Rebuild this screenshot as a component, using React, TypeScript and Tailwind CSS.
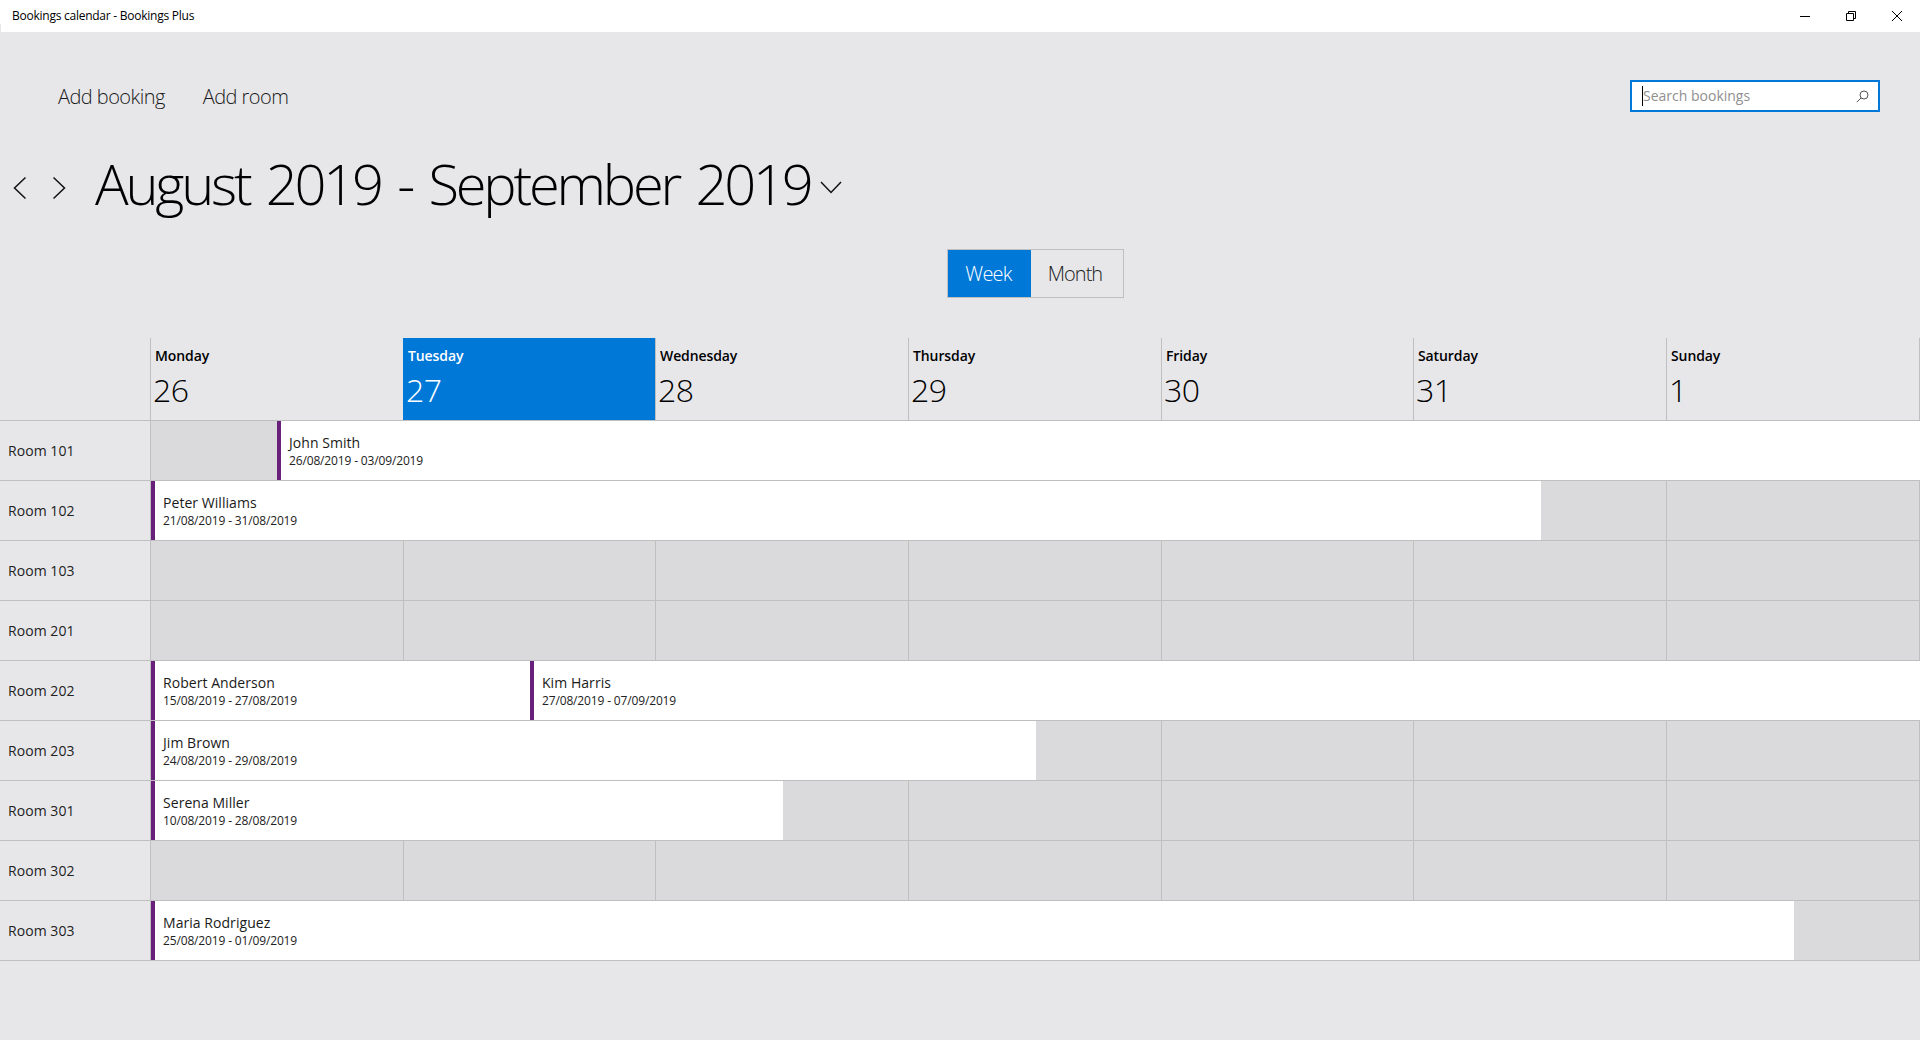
import React from "react";

type Seg = { k: "free"; span: number; line: boolean } | { k: "book"; span: number; name: string; dates: string };
const free = (span: number, line = true): Seg => ({ k: "free", span, line });
const book = (span: number, name: string, dates: string): Seg => ({ k: "book", span, name, dates });

const spanClass: Record<number, string> = {
  1: "col-span-1", 2: "col-span-2", 3: "col-span-3", 5: "col-span-5", 7: "col-span-7",
  11: "col-span-11", 13: "col-span-[13]", 14: "col-span-[14]",
};

const emptyWeek = [free(2), free(2), free(2), free(2), free(2), free(2), free(2)];

const rows: { room: string; segs: Seg[] }[] = [
  { room: "Room 101", segs: [free(1, false), book(13, "John Smith", "26/08/2019 - 03/09/2019")] },
  { room: "Room 102", segs: [book(11, "Peter Williams", "21/08/2019 - 31/08/2019"), free(1), free(2)] },
  { room: "Room 103", segs: emptyWeek },
  { room: "Room 201", segs: emptyWeek },
  { room: "Room 202", segs: [book(3, "Robert Anderson", "15/08/2019 - 27/08/2019"), book(11, "Kim Harris", "27/08/2019 - 07/09/2019")] },
  { room: "Room 203", segs: [book(7, "Jim Brown", "24/08/2019 - 29/08/2019"), free(1), free(2), free(2), free(2)] },
  { room: "Room 301", segs: [book(5, "Serena Miller", "10/08/2019 - 28/08/2019"), free(1), free(2), free(2), free(2), free(2)] },
  { room: "Room 302", segs: emptyWeek },
  { room: "Room 303", segs: [book(13, "Maria Rodriguez", "25/08/2019 - 01/09/2019"), free(1)] },
];

const days = [
  ["Monday", "26"], ["Tuesday", "27"], ["Wednesday", "28"], ["Thursday", "29"],
  ["Friday", "30"], ["Saturday", "31"], ["Sunday", "1"],
];

export default function App() {
  return (
    <div className="w-[1920px] h-[1040px] overflow-hidden bg-[#e7e7ea] text-black font-['Open_Sans',sans-serif]">
      {/* title bar */}
      <div className="relative h-8 bg-white flex items-center justify-between pl-3">
        <span className="absolute left-0 bottom-0 w-px h-2 bg-[#e7e7ea]" />
        <span className="text-[12px] tracking-[-0.25px]">Bookings calendar - Bookings Plus</span>
        <div className="flex items-center">
          <div className="w-[46px] h-8 flex items-center justify-center">
            <svg width="10" height="10" viewBox="0 0 10 10"><path d="M0 5.5H10" stroke="#000" fill="none" /></svg>
          </div>
          <div className="w-[46px] h-8 flex items-center justify-center">
            <svg width="10" height="10" viewBox="0 0 10 10" fill="none" stroke="#000"><path d="M0.5 2.5H7.5V9.5H0.5Z" /><path d="M2.5 2.5V0.5H9.5V7.5H7.5" /></svg>
          </div>
          <div className="w-[46px] h-8 flex items-center justify-center">
            <svg width="10" height="10" viewBox="0 0 10 10" fill="none" stroke="#000"><path d="M0 0L10 10M10 0L0 10" /></svg>
          </div>
        </div>
      </div>

      {/* toolbar */}
      <div className="mt-8 h-[66px] flex items-center justify-between pl-[58px] pr-10">
        <div className="flex items-center gap-[38px] text-[20px] font-light text-[#1a1a1a] tracking-[-0.55px]">
          <span>Add booking</span>
          <span>Add room</span>
        </div>
        <div className="w-[250px] h-8 mb-[2px] border-2 border-[#0078d7] bg-white flex items-center justify-between pl-[10px] pr-[9px]">
          <div className="flex items-center">
            <span className="w-px h-5 bg-black" />
            <span className="text-[14px] text-[#8f8f8f] mb-[2px]">Search bookings</span>
          </div>
          <svg width="13" height="13" viewBox="0 0 13 13" fill="none" stroke="#555"><circle cx="8" cy="5" r="4" /><path d="M5.2 7.8L0.8 12.2" /></svg>
        </div>
      </div>

      {/* period */}
      <div className="h-[112px] flex items-center">
        <button className="w-[13px] ml-[13px] mt-[3px]">
          <svg width="13" height="24" viewBox="0 0 13 24" fill="none" stroke="#111" strokeWidth="1.5"><path d="M12.5 1.5L1.5 12L12.5 22.5" /></svg>
        </button>
        <button className="w-[13px] ml-[27px] mt-[3px]">
          <svg width="13" height="24" viewBox="0 0 13 24" fill="none" stroke="#111" strokeWidth="1.5"><path d="M0.5 1.5L11.5 12L0.5 22.5" /></svg>
        </button>
        <h1 className="ml-[29px] text-[56px] font-light tracking-[-3.2px] [word-spacing:5px] leading-none mb-[6px]">August 2019 - September 2019</h1>
        <svg className="ml-[10px] mt-[3px]" width="22" height="13" viewBox="0 0 22 13" fill="none" stroke="#111" strokeWidth="1.5"><path d="M1 1L11 11.5L21 1" /></svg>
      </div>

      {/* view switch */}
      <div className="mt-[7px] mb-10 flex justify-center pl-[151px]">
        <div className="w-[177px] h-[49px] flex border border-[#bfbfbf] text-[20px] font-light">
          <div className="w-[83px] bg-[#0078d7] text-white flex items-center justify-center pt-px pr-[2px] tracking-[-0.8px]">Week</div>
          <div className="flex-1 flex items-center justify-center pt-px pr-[4px] text-[#222] tracking-[-1px]">Month</div>
        </div>
      </div>

      {/* header */}
      <div className="flex h-[83px] border-b border-[#bfbfbf]">
        <div className="w-[150px]" />
        <div className="flex-1 grid grid-cols-[253px_252px_253px_253px_252px_253px_1fr] border-r border-[#bfbfbf]">
          {days.map(([d, n], i) => (
            <div
              key={d}
              className={
                i === 1
                  ? "border-l border-[#0078d7] bg-[#0078d7] text-white pl-1 pt-[8px]"
                  : "border-l border-[#bfbfbf] pl-1 pt-[8px]"
              }
            >
              <div className="text-[14px] font-semibold leading-[20px] tracking-[-0.1px]">{d}</div>
              <div className="text-[32px] font-light leading-[42px] mt-[3px] -ml-[2px] tracking-[-0.5px]">{n}</div>
            </div>
          ))}
        </div>
      </div>

      {/* rows */}
      {rows.map((r) => (
        <div key={r.room} className="flex h-[60px] border-b border-[#bfbfbf]">
          <div className="w-[150px] pl-2 flex items-center text-[14px] text-[#222] tracking-[0.05px]">{r.room}</div>
          <div className="flex-1 grid grid-cols-[126px_127px_126px_126px_127px_126px_127px_126px_126px_126px_127px_126px_127px_126px] border-l border-[#bfbfbf]">
            {r.segs.map((s, i) =>
              s.k === "free" ? (
                <div
                  key={i}
                  className={`${spanClass[s.span]} bg-[#dadadc] ${s.line ? "border-r border-[#bfbfbf]" : ""}`}
                />
              ) : (
                <div key={i} className={`${spanClass[s.span]} bg-white border-l-4 border-[#68217a] pl-2 flex flex-col justify-center`}>
                  <div className="text-[14px] leading-[19px] text-[#1a1a1a] tracking-[0.05px]">{s.name}</div>
                  <div className="text-[12px] leading-[16px] mt-px text-[#222] tracking-[-0.15px]">{s.dates}</div>
                </div>
              )
            )}
          </div>
        </div>
      ))}
    </div>
  );
}
